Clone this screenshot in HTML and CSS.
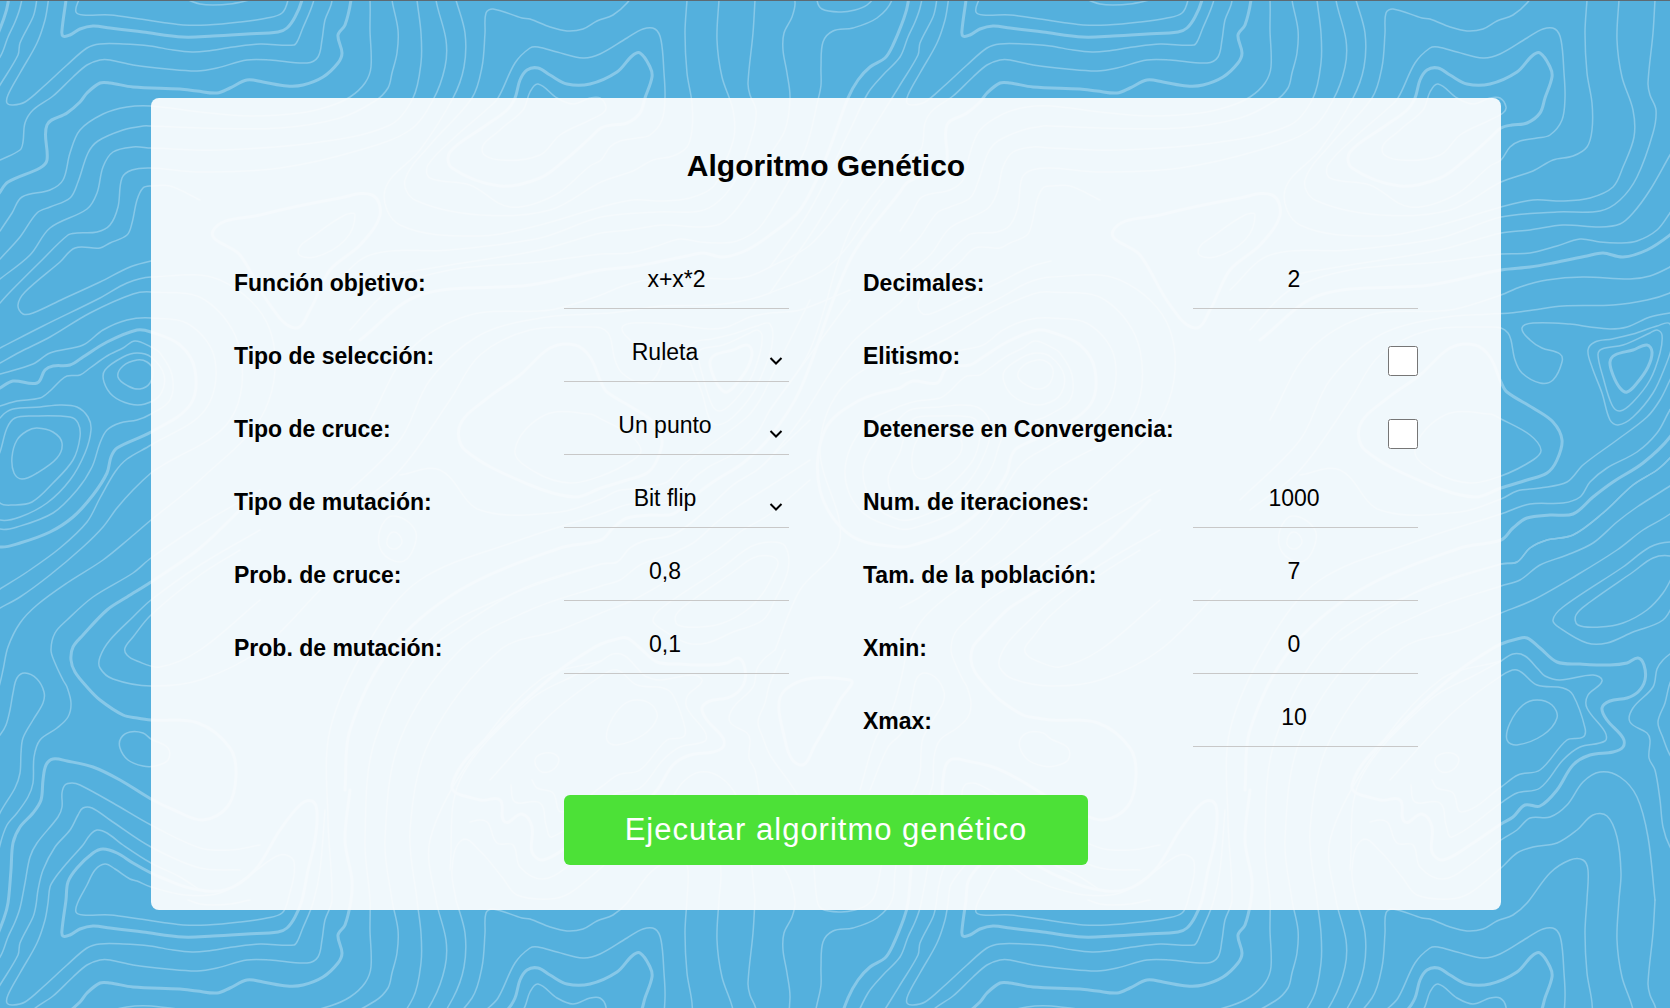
FILE: index.html
```
<!DOCTYPE html>
<html lang="es">
<head>
<meta charset="utf-8">
<meta name="viewport" content="width=device-width, initial-scale=1">
<title>Algoritmo Genético</title>
<link rel="stylesheet" href="styles.css">
</head>
<body>
<svg class="topo" aria-hidden="true">
  <defs>
    <g id="contours"></g>
    <pattern id="tile" width="900" height="900" patternUnits="userSpaceOnUse">
      <use href="#contours"/>
      <use href="#contours" x="900"/>
      <use href="#contours" x="-900"/>
      <use href="#contours" y="900"/>
      <use href="#contours" y="-900"/>
      <use href="#contours" x="900" y="-900"/>
      <use href="#contours" x="900" y="900"/>
      <use href="#contours" x="-900" y="-900"/>
    </pattern>
  </defs>
  <rect width="100%" height="100%" fill="url(#tile)"/>
</svg>
<main class="page">
  <form class="card">
    <h1 class="title">Algoritmo Genético</h1>
    <div class="columns">
      <div class="column">
        <div class="field"><label for="fn">Función objetivo:</label><input class="control" id="fn" type="text" value="x+x*2"></div>
        <div class="field"><label for="sel">Tipo de selección:</label><span class="picker"><select class="control narrow" id="sel"><option>Ruleta</option></select><svg class="chevron" viewBox="0 0 14 10"><path d="M1.5 2 L7 7.5 L12.5 2"/></svg></span></div>
        <div class="field"><label for="cruce">Tipo de cruce:</label><span class="picker"><select class="control narrow" id="cruce"><option>Un punto</option></select><svg class="chevron" viewBox="0 0 14 10"><path d="M1.5 2 L7 7.5 L12.5 2"/></svg></span></div>
        <div class="field"><label for="mut">Tipo de mutación:</label><span class="picker"><select class="control narrow" id="mut"><option>Bit flip</option></select><svg class="chevron" viewBox="0 0 14 10"><path d="M1.5 2 L7 7.5 L12.5 2"/></svg></span></div>
        <div class="field"><label for="pc">Prob. de cruce:</label><input class="control narrow" id="pc" type="text" inputmode="decimal" value="0,8"></div>
        <div class="field"><label for="pm">Prob. de mutación:</label><input class="control narrow" id="pm" type="text" inputmode="decimal" value="0,1"></div>
      </div>
      <div class="column">
        <div class="field"><label for="dec">Decimales:</label><input class="control narrow" id="dec" type="text" inputmode="numeric" value="2"></div>
        <div class="field"><label for="eli">Elitismo:</label><input class="check" id="eli" type="checkbox"></div>
        <div class="field"><label for="conv">Detenerse en Convergencia:</label><input class="check" id="conv" type="checkbox"></div>
        <div class="field"><label for="iter">Num. de iteraciones:</label><input class="control narrow" id="iter" type="text" inputmode="numeric" value="1000"></div>
        <div class="field"><label for="pob">Tam. de la población:</label><input class="control narrow" id="pob" type="text" inputmode="numeric" value="7"></div>
        <div class="field"><label for="xmin">Xmin:</label><input class="control narrow" id="xmin" type="text" inputmode="numeric" value="0"></div>
        <div class="field"><label for="xmax">Xmax:</label><input class="control narrow" id="xmax" type="text" inputmode="numeric" value="10"></div>
      </div>
    </div>
    <button class="run" type="button">Ejecutar algoritmo genético</button>
  </form>
</main>
<script src="contours.js"></script>
</body>
</html>
```
FILE: styles.css
```
* { box-sizing: border-box; }

body {
  margin: 0;
  min-height: 100vh;
  position: relative;
  background: #54b0dd;
  border-top: 1px solid #5d6a72;
  font-family: "Liberation Sans", Arial, sans-serif;
  color: #000;
}

.topo {
  position: absolute;
  top: -1px;
  left: 0;
  z-index: -1;
  width: 100%;
  height: calc(100% + 1px);
  fill: none;
  stroke: #87c8e8;
  stroke-linecap: round;
  stroke-linejoin: round;
}

.topo rect { stroke: none; }
.thin { stroke-width: 1.5; }
.thick { stroke-width: 3; }

.page { padding: 97px 18px 0 0; }

.card {
  width: 100%;
  max-width: 1350px;
  margin: 0 auto;
  padding: 51px 83px 45px;
  border-radius: 8px;
  background: rgba(254, 254, 254, 0.92);
}

.title {
  margin: 0 0 78px;
  font-size: 30px;
  line-height: 34px;
  text-align: center;
}

.columns {
  display: grid;
  grid-template-columns: 1fr 1fr;
  gap: 74px;
}

.column {
  display: flex;
  flex-direction: column;
  gap: 25px;
}

.field {
  display: grid;
  grid-template-columns: 1fr 225px;
  align-items: center;
  height: 48px;
}

.field label {
  padding-bottom: 4px;
  font-size: 23px;
  font-weight: bold;
  line-height: 26px;
}

.control {
  display: block;
  width: 100%;
  height: 48px;
  margin: 0;
  padding: 0 0 11px;
  border: 0;
  border-bottom: 1px solid #c8c8c8;
  border-radius: 0;
  background: transparent;
  appearance: none;
  color: #000;
  font-family: inherit;
  font-size: 23px;
  text-align: center;
  text-align-last: center;
}

.narrow { padding-right: 23px; }

.picker { position: relative; }

.chevron {
  position: absolute;
  right: 6px;
  bottom: 16px;
  width: 14px;
  height: 10px;
  fill: none;
  stroke: #000;
  stroke-width: 2;
  pointer-events: none;
}

.check {
  justify-self: end;
  width: 30px;
  height: 30px;
  margin: 6px 0 0;
}

.run {
  display: block;
  width: 524px;
  max-width: 100%;
  height: 70px;
  margin: 48px auto 0;
  padding: 0;
  border: 0;
  border-radius: 6px;
  background: #4ce137;
  color: #fff;
  font-family: inherit;
  font-size: 31px;
  letter-spacing: 1px;
}
```
FILE: contours.js
```
// Contour lines of the 900 x 900 background tile, as lists of x,y points.
// A line that starts with "z" is closed.
const thin = `
200,890 180,877 151,863 123,845 107,833 97,830 90,835 83,845 67,863 55,878 50,887 48,903 45,920 37,943 20,973 8,995 7,1003 13,1005 25,1002 43,987 67,965 87,948 100,944 123,944 150,946 173,950 192,952 207,951 233,947 260,944 294,945 298,940 302,930 313,903 320,870 325,810
z 95,870 105,864 115,869 130,879 137,881 151,887 185,895 220,893 250,875 280,855 294,862 288,900 282,913 267,918 240,922 207,925 183,925 167,923 140,919 110,915 83,915 76,912 78,902 87,885
188,900 200,904 213,905 230,904 250,900
240,870 200,868 151,847 110,820 92,808 83,808 78,815 70,830 55,847 43,870 38,890 36,905 33,917 20,943 18,955 0,985 -8,998 -40,1050 -80,1120 -130,1193
260,845 230,850 200,848 151,825 113,803 80,785 72,783 65,785 62,793 62,807 58,817 37,843 30,857 25,883 20,908 15,922 8,937 0,957 -17,975 -32,993 -50,1030 -90,1110 -130,1167
260,490 200,525 151,558 133,573 93,597 67,620 55,633 51,650 55,663 63,680 67,687 71,703 68,717 57,728 40,740 34,757 33,783 28,797 17,813 7,825 0,845 -5,872 -8,900 -23,918 -47,928 -67,931 -77,942 -79,967 -79,985 -82,1000 -95,1050 -130,1113
-30,790 -12,747 0,735 6,725 10,710 13,693 17,678 25,673 37,679 44,692 43,703 33,720 23,738 21,753 20,773 15,788 0,813 -15,850 -25,895 -33,905 -45,910 -60,912 -78,909 -83,900 -88,850 -100,800 -130,755 -137,738 -142,722 -135,703 -130,683 -115,650
z 151,739 143,733 130,732 121,738 120,748 128,760 143,766 155,766 168,760 168,748
260,530 200,565 151,600 133,617 110,640 100,657 100,668 113,679 151,686 200,680 260,650 320,590
240,550 200,575 151,615 133,637 125,648 127,655 137,661 160,667 200,650 260,600
0,348 43,326 100,298 127,283 151,277 220,280 270,330 265,410 200,480 151,520 130,538 103,560 67,583 37,605 20,623 8,647 3,670 0,683 -8,710 -25,740 -40,790
0,348 -60,390 -80,450 -60,540 -100,590 -125,650
0,363 20,352 50,337 90,313 133,294 151,292 205,300 240,350 230,420 160,467 151,473 133,490 117,508 103,527 83,547 50,575 20,597 0,608
0,374 33,364 50,353 83,345 103,330 127,320 151,318 190,325 215,360 205,410 151,445 127,459 115,472 100,498 87,522 60,548 27,572 0,589
0,406 17,401 40,398 50,391 60,381 67,376 80,375 90,368 107,356 123,348 135,341 151,347 160,353 172,375 170,400 151,414 137,420 120,423 107,430 100,443 92,467 77,490 53,513 17,527 0,529 -40,510 -55,470 -35,425 0,406
0,418 5,413 13,409 40,407 60,405 77,407 88,417 91,430 85,453 70,480 47,503 20,517 0,520 -25,505 -37,470 -20,435 0,418
z 0,503 13,505 32,502 53,483 73,460 80,437 78,423 70,417 33,416 15,418 7,428 0,452 -12,480
z 37,428 53,432 62,443 57,458 37,473 22,479 14,473 12,457 17,440 27,431
z 137,360 147,362 153,370 150,383 140,389 128,386 118,377 123,366
z 151,357 137,353 123,357 105,370 104,382 113,396 130,404 145,404 160,395 164,375
151,261 130,267 100,282 63,299 33,313 23,314 18,305 25,292 60,262 75,248 100,248 110,243 127,235 132,223 137,200 143,188 151,186 170,186 200,200
0,303 10,292 40,262 68,235 77,233 97,232 110,225 118,207 122,178 132,170 151,168 200,172 280,168 360,150 410,130 433,100 445,67 446,40 436,0 430,-60 470,-140 540,-220 601,-239
0,279 30,255 50,228 87,209 97,193 103,167 113,152 133,147 151,148 220,150 320,142 390,125 413,98 421,63 421,33 417,0 410,-70 430,-160 500,-250 560,-270 601,-287 633,-300 677,-325 717,-350 743,-370 770,-386 810,-420
0,259 20,237 37,213 50,207 70,198 78,182 88,153 98,141 123,130 143,126 151,126 200,128 280,128 340,118 375,101 388,88 392,73 397,53 398,30 392,0 385,-60 400,-160 460,-250 530,-290 601,-314 620,-320 640,-335 667,-345 693,-357 717,-378 737,-393 770,-414 810,-440
0,231 12,213 22,197 50,190 63,180 70,153 80,130 103,114 127,107 151,106 200,112 250,116 300,113 330,106 350,97 365,83 371,67 370,30 370,0 365,-60 375,-160 430,-260 510,-305 601,-336 617,-338 630,-352 647,-360 673,-365 703,-387 733,-415 757,-430 770,-442 810,-480
0,160 20,150 23,142 25,123 33,110 53,96 73,77 87,65 100,60 110,60 133,65 167,69 197,71 217,68 247,60 270,60 307,63 318,57 322,40 325,20 332,0 328,-80 330,-170 370,-260 420,-320 520,-360 601,-386 630,-396 663,-397 680,-403 690,-418 707,-432 737,-448 757,-467 770,-490 810,-550 850,-670 900,-740
456,0 465,33 464,67 453,98 420,150 385,190 400,225 480,236 540,225 601,207 633,200 663,201 690,198 713,187 723,167 734,137 733,110 722,77 717,40 719,0 721,-27 717,-63 707,-84 693,-85 677,-70 657,-57 633,-53 617,-47 601,-32 570,-7 550,-1 517,-5 502,-23 480,-49 462,-60 452,-30 456,0
687,0 685,33 687,73 692,103 692,130 687,147 673,156 653,160 633,171 601,182 550,210 480,215 415,200 405,180 430,145 472,98 482,67 485,33 486,13 493,9 522,18 530,19 550,27 567,31 583,29 597,21 613,15 627,3 650,-27 670,-40 683,-40 688,-30 687,0
755,0 753,33 748,83 750,95 756,110 753,133 737,177 720,200 700,211 657,212 601,217 540,238 450,250 370,255 330,290
755,900 748,837 737,797 720,777 700,772 683,782 667,805 650,817 630,818 617,830 601,840 570,865 543,879 520,867 513,845 497,843 488,823 480,820 470,822
775,650 763,660 757,669 753,687 733,708 730,722 747,733 750,740 749,758 755,770 760,800 763,827 770,847 788,875 795,902 792,917 784,933 783,950 787,973 790,998 785,1030 770,1055 750,1090 733,1113 720,1124 700,1127 663,1125 630,1130 601,1133 540,1150 450,1165 390,1175
z 486,110 498,98 515,63 530,48 538,47 557,52 583,58 600,54 627,38 643,29 655,29 661,40 664,73 665,98 662,120 650,135 637,138 620,141 610,147 601,160 590,166 555,195 510,207 470,185 430,178 428,165 455,137
z 523,110 530,92 538,84 557,98 573,104 590,98 600,98 606,107 603,113 590,120 560,135 540,155 500,160 482,150 500,130
770,213 757,230 737,241 720,243 700,242 680,239 657,246 630,253 601,254 540,262 450,270 390,290 350,330
848,200 810,245 770,267 750,276 730,279 683,277 647,280 620,287 601,295 550,310 470,315 410,350 370,420
880,200 830,265 770,293 747,300 713,305 663,306 633,310 610,313 590,314 540,318 480,335 430,380 400,440 340,500
850,290 800,310 770,313 750,317 727,327 710,329 690,327 670,324 633,323 622,328 630,340 642,348 660,354 662,362 653,380 640,383 622,373 615,360 611,340 608,333 601,328 590,327 530,330 480,355 450,400 400,470 350,510
z 770,324 757,326 733,334 712,339 695,342 688,350 692,367 702,393 710,420 718,425 733,417 753,393 765,367 772,345
z 757,330 750,333 723,345 702,349 698,355 703,377 712,405 720,411 733,402 750,380 760,353 762,335
810,300 770,380 760,400 747,417 717,440 683,465 667,482 640,488 617,491 601,499 560,512 480,510 440,470 400,475
850,300 770,410
z 590,414 601,419 630,435 641,450 633,460 601,476 570,483 535,472 515,450 545,415
0,303 -50,345 -100,420 -130,458 -143,470 -167,485 -197,513 -227,535 -253,540 -270,548 -283,562 -299,564 -380,590 -460,640
z 770,542 750,547 723,567 663,607 653,620 660,628 687,643 707,643 733,632 763,620 775,600 788,570 785,546
z 770,556 753,558 733,572 690,602 676,615 678,625 700,627 723,623 747,610 763,593 773,575 778,562
450,870 460,780 530,700 575,675 601,661 613,654 625,656 638,669 645,676 660,680 693,675 702,681 688,695 687,708 705,732 705,741 680,747 663,760 640,788 617,793 601,803 552,837 546,825 540,803 515,802 511,785
490,780 550,715 601,676 617,670 637,685 663,688 673,695 685,728 683,737 667,740 640,770 618,775 601,787 562,812 553,793 537,788 532,780
z 637,700 652,705 657,718 643,735 617,745 607,740 610,723 623,705
z 535,760 545,753 558,757 555,768 542,772
z 393,532 402,541 395,549 387,544
z 393,516 415,530 412,552 400,562 382,552 380,530
z 315,235 345,215 355,215 345,240 315,257 298,252
`;

const thick = `
z 160,877 151,873 133,863 117,853 103,849 93,853 77,868 68,882 66,900 62,930 63,936 70,935 80,929 93,926 110,928 143,932 183,937 213,936 247,934 278,932 287,928 295,917 302,900 308,870 315,840 317,812 312,801 300,805 280,830 255,870 225,890 190,888
250,500 200,548 151,582 127,597 107,610 83,635 73,647 71,660 75,672 87,687 100,700 123,715 137,718 151,720 198,723 230,748 236,775 228,806 203,820 174,810 151,799 120,780 93,767 67,761 53,759 46,765 43,780 41,800 33,813 20,827 13,843 11,870 8,903 4,918 -7,945 -15,958 -30,967 -42,980 -52,998 -75,1060 -100,1110 -130,1135 -153,1150 -177,1157 -197,1153 -213,1156 -247,1163 -270,1167 -299,1170 -370,1185 -480,1195 -540,1240
0,388 13,381 37,383 45,370 53,366 70,365 83,357 107,342 137,330 151,332 180,345 195,370 190,405 151,432 117,448 111,457 107,473 93,495 73,517 50,532 20,543 0,547 -50,535 -80,490 -75,430 -40,400 0,388
350,-110 345,-60 352,-20 351,0 345,25 338,35 342,53 338,63 323,77 303,85 287,86 263,82 247,80 230,88 217,93 197,91 180,89 133,87 110,83 100,83 87,93 80,102 67,113 47,125 47,160 40,168 8,182 0,192 -50,260 -100,390 -130,437 -157,463 -187,482 -207,497 -227,514 -250,515 -273,518 -287,528 -299,540 -340,548 -440,590 -510,650 -550,730 -555,790
z 507,110 515,98 520,80 527,70 538,68 550,75 567,84 590,84 617,72 632,56 640,53 650,67 652,77 645,98 640,113 627,123 612,125 601,128 590,138 565,160 540,178 500,186 452,168 450,152 485,126
z 747,345 733,350 715,355 710,362 713,375 720,388 727,392 737,383 748,367 752,352
z 590,357 601,382 607,392 633,408 653,422 662,440 657,460 647,473 627,480 601,488 575,497 530,485 465,450 460,425 485,400 520,375 550,348 575,345
z 590,650 601,644 617,639 627,638 640,648 657,662 680,664 710,665 727,663 738,658 744,665 745,680 738,692 727,698 710,701 702,708 707,720 723,738 723,747 713,752 690,755 673,765 657,790 640,806 625,805 613,817 601,824 570,845 543,860 532,852 532,827 522,814 505,822 500,800 480,800 452,785 500,725 560,670
z 213,231 260,215 340,198 372,195 380,215 360,245 330,270 310,310 295,328 270,305 240,255
z 785,690 850,680 840,700 815,745 800,765 785,740
`;

function smooth(line) {
  const closed = line.startsWith("z");
  const pts = line.replace("z ", "").split(" ").map(p => p.split(",").map(Number));
  const n = pts.length;
  const at = i => closed ? pts[(i + n) % n] : pts[Math.max(0, Math.min(n - 1, i))];
  const dir = i => {
    const [a, b] = [at(i - 1), at(i + 1)];
    const d = Math.hypot(b[0] - a[0], b[1] - a[1]) || 1;
    return [(b[0] - a[0]) / d, (b[1] - a[1]) / d];
  };
  let d = `M${pts[0]}`;
  for (let i = 0; i < (closed ? n : n - 1); i++) {
    const [p, q, u, v] = [at(i), at(i + 1), dir(i), dir(i + 1)];
    const k = Math.hypot(q[0] - p[0], q[1] - p[1]) / 3;
    d += `C${p[0] + u[0] * k} ${p[1] + u[1] * k} ${q[0] - v[0] * k} ${q[1] - v[1] * k} ${q[0]} ${q[1]}`;
  }
  return d;
}

const group = document.getElementById("contours");
for (const [name, lines] of [["thin", thin], ["thick", thick]]) {
  const path = document.createElementNS("http://www.w3.org/2000/svg", "path");
  path.setAttribute("class", name);
  path.setAttribute("d", lines.trim().split("\n").map(smooth).join(""));
  group.appendChild(path);
}
```
